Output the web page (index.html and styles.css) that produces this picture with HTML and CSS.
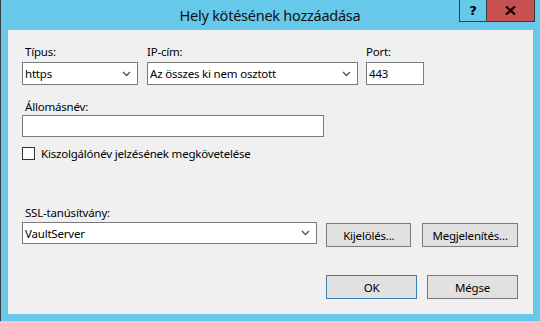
FILE: index.html
```html
<!DOCTYPE html>
<html lang="hu">
<head>
<meta charset="utf-8">
<title>Hely kötésének hozzáadása</title>
<link rel="stylesheet" href="styles.css">
</head>
<body>
<div class="window">
  <div class="titlebar">
    <span class="title">Hely kötésének hozzáadása</span>
    <div class="caption-buttons">
      <div class="cap-btn help">?</div>
      <div class="cap-btn close">
        <svg width="11" height="9" viewBox="0 0 11 9"><path d="M1 0.5 L10 8.5 M10 0.5 L1 8.5" stroke="#000" stroke-width="2.2" fill="none"/></svg>
      </div>
    </div>
  </div>
  <div class="client">
    <div class="row-top">
      <div class="field f-type">
        <div class="label">Típus:</div>
        <div class="combo"><span>https</span><svg class="chev" width="9" height="6" viewBox="0 0 9 6"><path d="M1 1 L4.5 4.5 L8 1" stroke="#555" stroke-width="1.4" fill="none"/></svg></div>
      </div>
      <div class="field f-ip">
        <div class="label">IP-cím:</div>
        <div class="combo"><span>Az összes ki nem osztott</span><svg class="chev" width="9" height="6" viewBox="0 0 9 6"><path d="M1 1 L4.5 4.5 L8 1" stroke="#555" stroke-width="1.4" fill="none"/></svg></div>
      </div>
      <div class="field f-port">
        <div class="label">Port:</div>
        <div class="textbox"><span>443</span></div>
      </div>
    </div>
    <div class="host">
      <div class="label">Állomásnév:</div>
      <div class="textbox host-box"></div>
    </div>
    <div class="check-row">
      <div class="checkbox"></div>
      <span>Kiszolgálónév jelzésének megkövetelése</span>
    </div>
    <div class="ssl">
      <div class="label">SSL-tanúsítvány:</div>
      <div class="ssl-row">
        <div class="combo ssl-combo"><span>VaultServer</span><svg class="chev" width="9" height="6" viewBox="0 0 9 6"><path d="M1 1 L4.5 4.5 L8 1" stroke="#555" stroke-width="1.4" fill="none"/></svg></div>
        <div class="btn btn-select">Kijelölés...</div>
        <div class="btn btn-view">Megjelenítés...</div>
      </div>
    </div>
    <div class="footer">
      <div class="btn btn-ok">OK</div>
      <div class="btn btn-cancel">Mégse</div>
    </div>
  </div>
</div>
</body>
</html>
```

FILE: styles.css
```css
* { box-sizing: border-box; }
html, body { margin: 0; padding: 0; }
body {
  font-family: "Noto Sans", "Open Sans", sans-serif;
  font-size: 11.5px;
  letter-spacing: -0.2px;
  color: #000;
  background: #fff;
}
.window {
  width: 540px;
  height: 321px;
  background: #66c9e9;
  border-left: 1px solid #3a3a3a;
  display: flex;
  flex-direction: column;
  position: relative;
}
.titlebar {
  height: 30px;
  display: flex;
  align-items: center;
  justify-content: center;
  padding-bottom: 1px;
}
.title {
  font-size: 14.5px;
  letter-spacing: -0.25px;
  color: #111;
  margin-left: -1px;
}
.caption-buttons {
  position: absolute;
  top: 0;
  right: 5px;
  display: flex;
  height: 22px;
  border: 1px solid #3c3c3c;
  border-top: none;
}
.cap-btn {
  display: flex;
  align-items: center;
  justify-content: center;
  height: 21px;
}
.help {
  width: 27px;
  border-right: 1px solid #3c3c3c;
  font-weight: bold;
  font-size: 13px;
  letter-spacing: 0;
  font-family: "DejaVu Sans", sans-serif;
}
.close {
  width: 47px;
  background: #c75050;
}
.client {
  flex: 1;
  margin: 0 7px 7px 7px;
  background: #f0f0f0;
  padding: 14px 15px 0 14px;
  display: flex;
  flex-direction: column;
}
.label {
  height: 15px;
  line-height: 15px;
  padding-left: 3px;
}
.row-top {
  display: flex;
  gap: 9px;
}
.field .label { margin-bottom: 3px; }
.f-type { width: 116px; }
.f-ip { width: 211px; }
.f-port { width: 58px; margin-left: -1px; }
.f-port .label, .f-ip .label { padding-left: 0; }
.combo, .textbox {
  height: 23px;
  background: #fff;
  border: 1px solid #7a7a7a;
  display: flex;
  align-items: center;
  padding-left: 2px;
  white-space: nowrap;
}
.combo span { flex: 1; }
.chev { margin-right: 6px; }
.host { margin-top: 14px; }
.host .label { margin-bottom: 1px; }
.host-box { width: 302px; height: 22px; }
.check-row {
  margin-top: 10px;
  display: flex;
  align-items: center;
  gap: 6px;
  height: 13px;
}
.checkbox {
  width: 13px;
  height: 13px;
  background: #fff;
  border: 1px solid #333;
}
.ssl { margin-top: 45px; }
.ssl .label { margin-bottom: 2px; }
.ssl-row {
  display: flex;
  align-items: flex-start;
}
.ssl-combo { width: 296px; height: 22px; }
.btn {
  height: 24px;
  background: #e1e1e1;
  border: 1px solid #7a7a7a;
  display: flex;
  align-items: center;
  justify-content: center;
}
.btn-select { width: 85px; margin-left: 9px; margin-top: 1px; }
.btn-view { width: 96px; margin-left: 11px; margin-top: 1px; }
.footer {
  margin-top: 28px;
  display: flex;
  justify-content: flex-end;
  gap: 10px;
}
.btn-ok { width: 91px; border-color: #3c7fb1; }
.btn-cancel { width: 91px; }
```
